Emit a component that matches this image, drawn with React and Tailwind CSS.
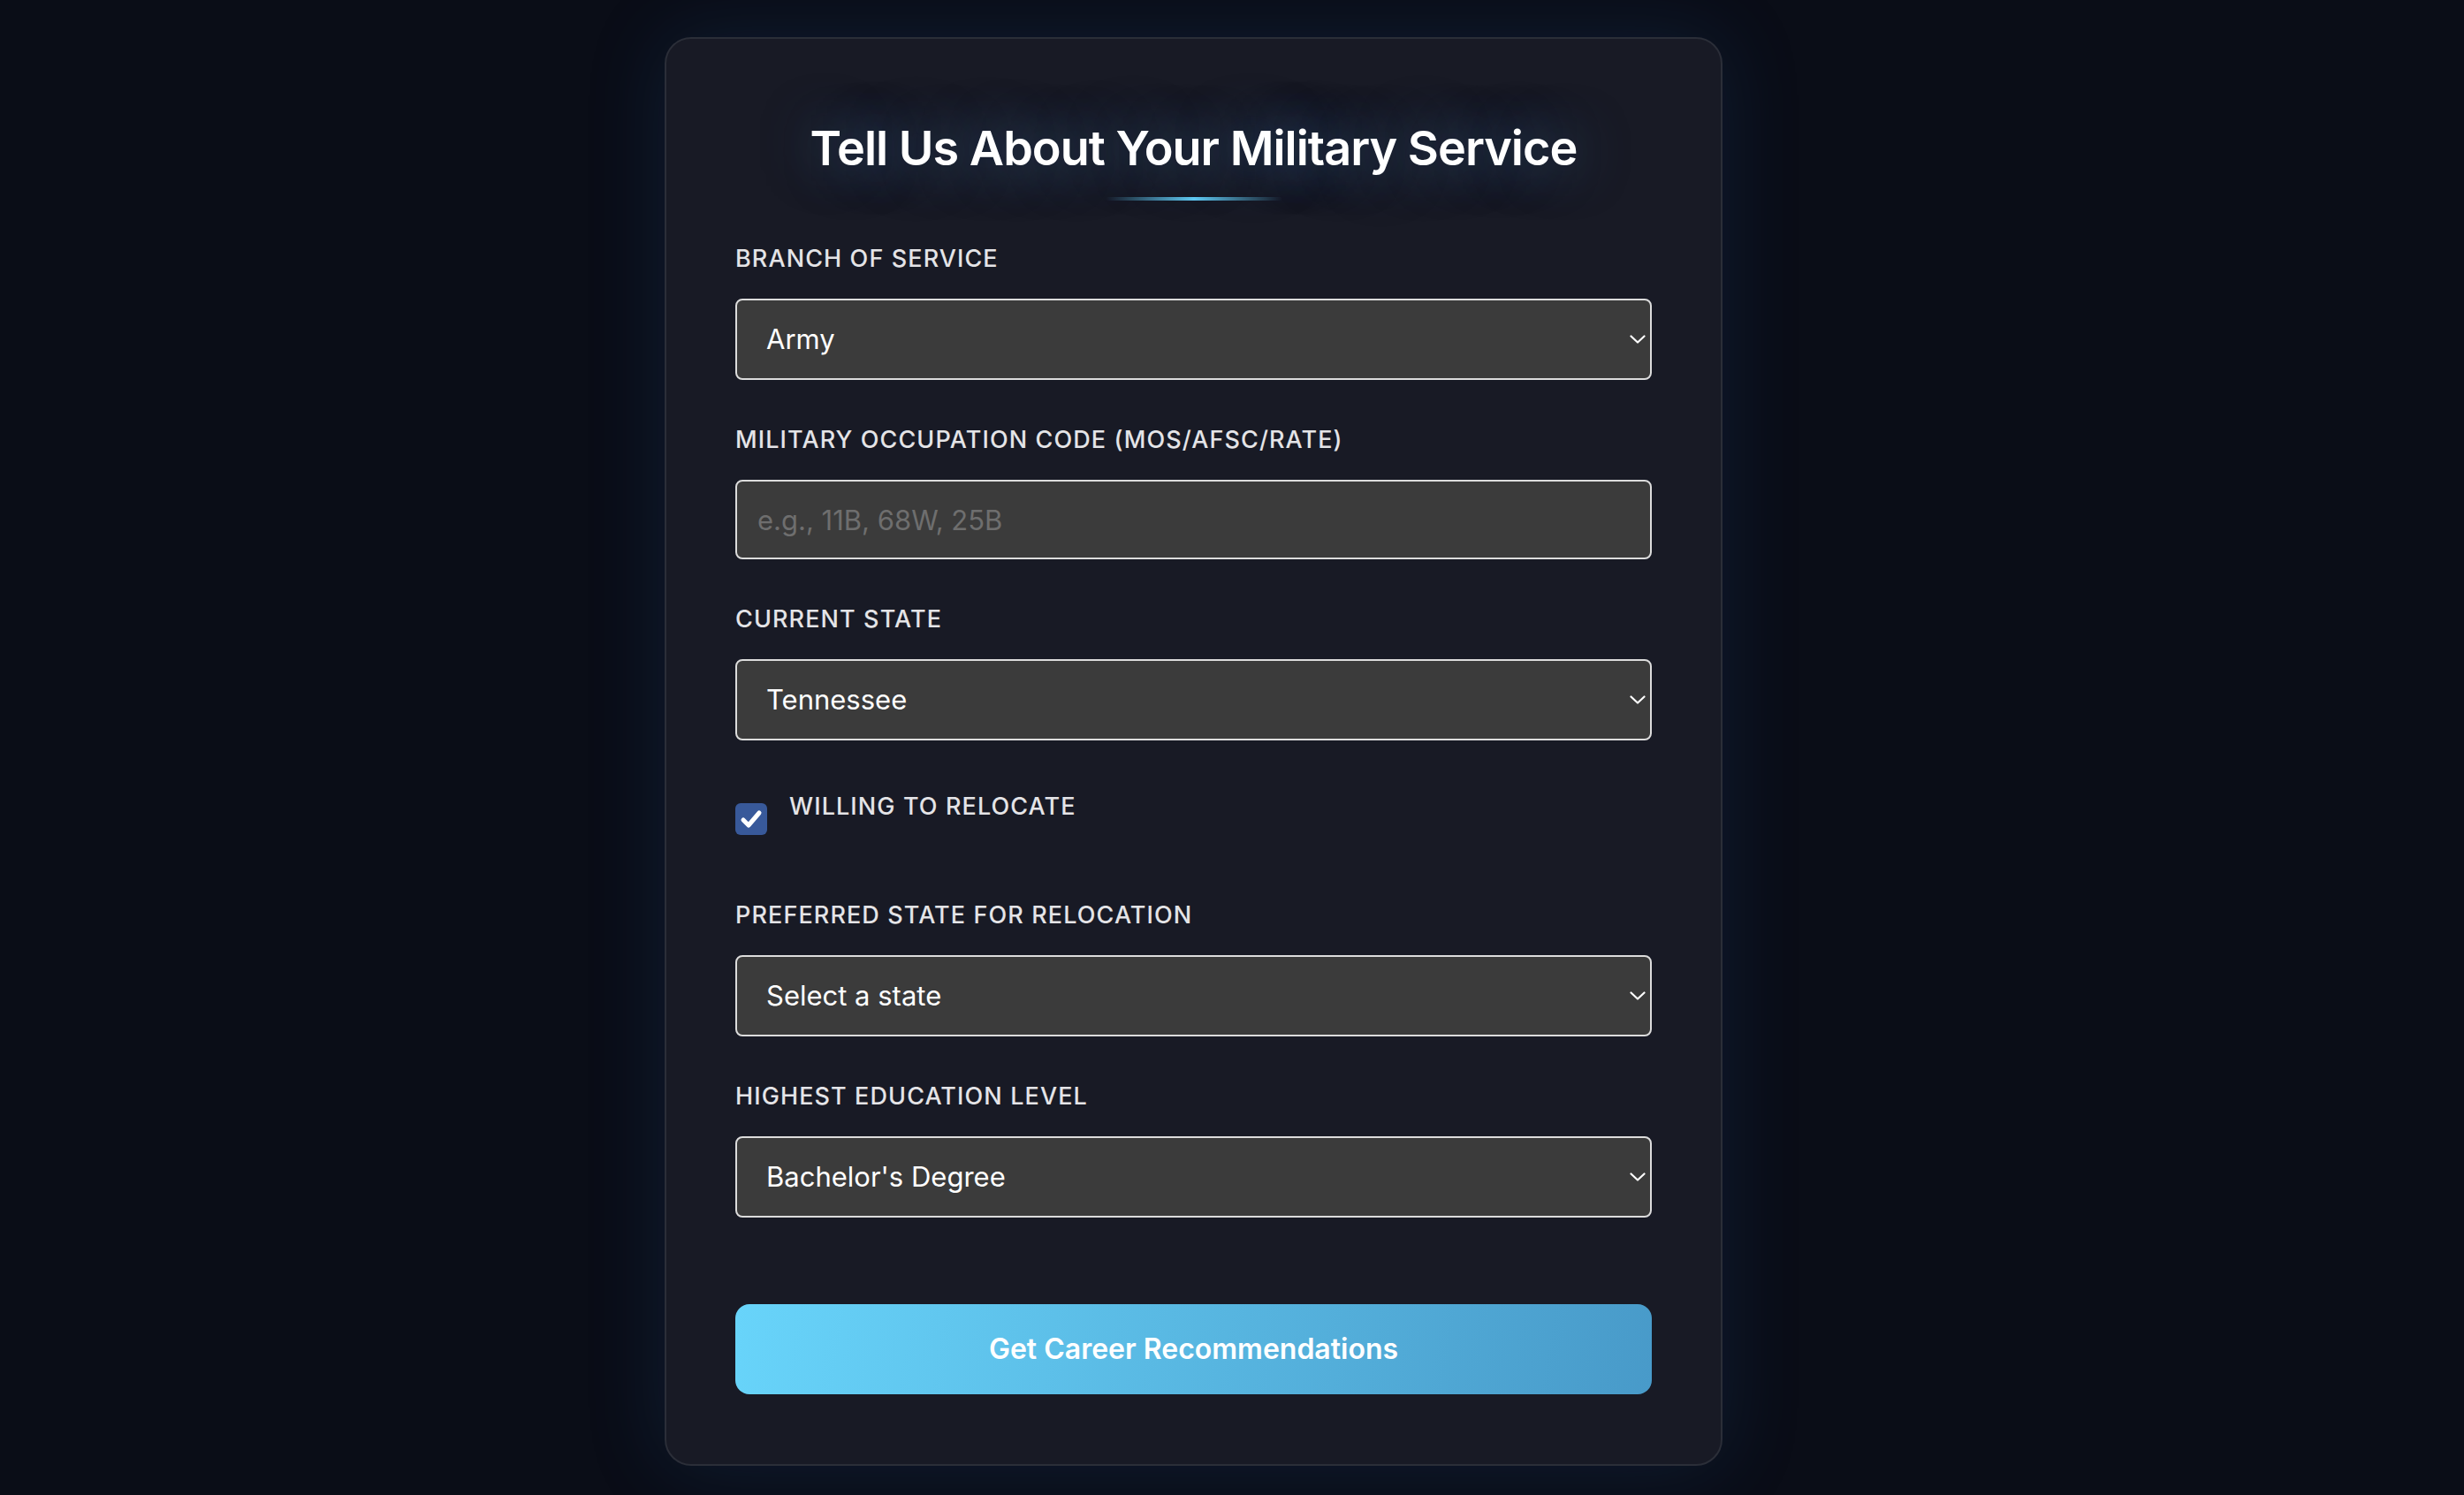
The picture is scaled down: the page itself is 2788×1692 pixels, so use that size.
import { useState } from 'react'

const BRANCHES = ['Army', 'Navy', 'Air Force', 'Marine Corps', 'Coast Guard', 'Space Force']
const STATES = ['Alabama', 'California', 'Florida', 'Georgia', 'New York', 'North Carolina', 'Tennessee', 'Texas', 'Virginia', 'Washington']
const EDUCATION = ['High School Diploma', "Associate's Degree", "Bachelor's Degree", "Master's Degree", 'Doctorate']

function Chevron() {
  return (
    <svg className="pointer-events-none absolute right-[7px] top-1/2 -translate-y-1/2" width="18" height="10" viewBox="0 0 18 10" fill="none">
      <path d="M1.5 1.5 L9 8.5 L16.5 1.5" stroke="#fff" strokeWidth="2.2" strokeLinecap="round" strokeLinejoin="round" />
    </svg>
  )
}

function Label({ htmlFor, children }) {
  return (
    <label htmlFor={htmlFor} className="block mb-[24px] text-[27px] leading-[42px] font-medium tracking-[1.1px] uppercase text-[#e4e4e7]">
      {children}
    </label>
  )
}

function Select({ id, value, onChange, options, placeholder }) {
  return (
    <div className="relative">
      <select id={id} value={value} onChange={e => onChange(e.target.value)}
        className="appearance-none w-full h-[92px] rounded-[8px] border-2 border-[#dcdcdc] bg-[#3b3b3b] pl-[33px] pr-[40px] text-[31px] text-white outline-none">
        {placeholder && <option value="">{placeholder}</option>}
        {options.map(o => <option key={o} value={o}>{o}</option>)}
      </select>
      <Chevron />
    </div>
  )
}

export default function App() {
  const [branch, setBranch] = useState('Army')
  const [mos, setMos] = useState('')
  const [state, setState] = useState('Tennessee')
  const [relocate, setRelocate] = useState(true)
  const [prefState, setPrefState] = useState('')
  const [edu, setEdu] = useState("Bachelor's Degree")

  return (
    <div className="h-screen overflow-hidden bg-[#0a0d17] flex justify-center pr-[87px] pt-[42px] font-['Inter','Noto_Sans',sans-serif]">
      <div className="w-[1197px] h-[1617px] shrink-0 rounded-[30px] border-2 border-[#2b2e38] bg-[#181a25] px-[78px] pt-[90px] shadow-[0_0_90px_rgba(40,100,170,0.18)]">
        <div className="flex flex-col items-center mb-[45px]">
          <h1 className="text-[54px] leading-[68px] font-semibold text-white tracking-[-1px] [text-shadow:0_0_60px_rgba(90,160,230,0.5)]">
            Tell Us About Your Military Service
          </h1>
          <div className="mt-[21px] h-[4px] w-[200px] rounded-full bg-[linear-gradient(90deg,transparent,#5ec8f2,transparent)]" />
        </div>

        <div className="mb-[47px]">
          <Label htmlFor="branch">Branch of Service</Label>
          <Select id="branch" value={branch} onChange={setBranch} options={BRANCHES} />
        </div>

        <div className="mb-[47px]">
          <Label htmlFor="mos">Military Occupation Code (MOS/AFSC/RATE)</Label>
          <input id="mos" value={mos} onChange={e => setMos(e.target.value)} placeholder="e.g., 11B, 68W, 25B"
            className="w-full h-[90px] rounded-[8px] border-2 border-[#dcdcdc] bg-[#3b3b3b] px-[23px] text-[31px] text-white placeholder:text-[#6e6e6e] outline-none" />
        </div>

        <div className="mb-[54px]">
          <Label htmlFor="state">Current State</Label>
          <Select id="state" value={state} onChange={setState} options={STATES} />
        </div>

        <label className="flex items-start gap-[25px] mb-[70px] cursor-pointer">
          <input type="checkbox" className="sr-only" checked={relocate} onChange={e => setRelocate(e.target.checked)} />
          <span className={`mt-[17px] flex h-[36px] w-[36px] items-center justify-center rounded-[6px] ${relocate ? 'bg-[#38599a]' : 'bg-white border-2 border-[#767676]'}`}>
            {relocate && (
              <svg width="26" height="22" viewBox="0 0 26 22" fill="none">
                <path d="M4 12 L10 18 L22 4" stroke="#fff" strokeWidth="5" strokeLinecap="round" strokeLinejoin="round" />
              </svg>
            )}
          </span>
          <span className="text-[27px] leading-[42px] font-medium tracking-[1.1px] uppercase text-[#e4e4e7]">Willing to Relocate</span>
        </label>

        <div className="mb-[47px]">
          <Label htmlFor="pref">Preferred State for Relocation</Label>
          <Select id="pref" value={prefState} onChange={setPrefState} options={STATES} placeholder="Select a state" />
        </div>

        <div className="mb-[98px]">
          <Label htmlFor="edu">Highest Education Level</Label>
          <Select id="edu" value={edu} onChange={setEdu} options={EDUCATION} />
        </div>

        <button type="button"
          className="w-full h-[102px] rounded-[16px] bg-[linear-gradient(100deg,#68d4fa,#489ac9)] text-[32px] font-semibold text-white">
          Get Career Recommendations
        </button>
      </div>
    </div>
  )
}
